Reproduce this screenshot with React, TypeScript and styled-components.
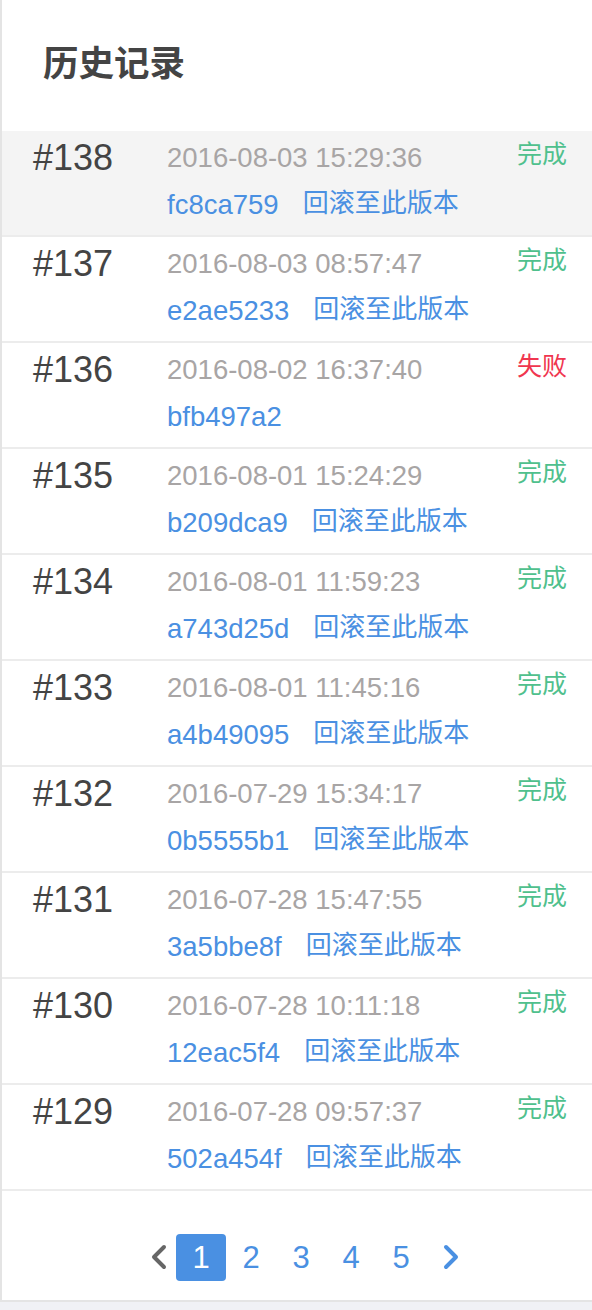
import React from "react";
import styled, { createGlobalStyle } from "styled-components";

const GlobalStyle = createGlobalStyle`
  html, body {
    margin: 0;
    padding: 0;
    background: #f0f1f5;
  }
  body {
    font-family: "Liberation Sans", "Noto Sans CJK SC", sans-serif;
  }
  * { box-sizing: border-box; }
`;

const Card = styled.div`
  width: 592px;
  background: #fff;
  border-left: 2px solid #e4e4e4;
  border-bottom: 2px solid #e4e4e4;
`;

const Header = styled.div`
  height: 131px;
  padding: 47px 0 0 41px;
`;

const Title = styled.h1`
  margin: 0;
  font-size: 35.5px;
  line-height: 35px;
  font-weight: 700;
  color: #444;
`;

const Row = styled.div<{ $active?: boolean }>`
  display: grid;
  grid-template-columns: 134px 1fr auto;
  height: 106px;
  padding: 0 25px 0 31px;
  background: ${(p) => (p.$active ? "#f4f4f4" : "#fff")};
  border-bottom: 2px solid #ececec;
`;

const Num = styled.div`
  padding-top: 9px;
  font-size: 36px;
  line-height: 36px;
  color: #444;
`;

const Info = styled.div`
  display: flex;
  flex-direction: column;
  padding-top: 13px;
  gap: 19px;
`;

const Date = styled.div`
  font-size: 27.5px;
  line-height: 28px;
  color: #a8a5a5;
`;

const Line = styled.div`
  display: flex;
  align-items: baseline;
  gap: 24px;
  font-size: 27.5px;
  line-height: 28px;
  color: #4a90e2;
`;

const Hash = styled.span``;

const Rollback = styled.a`
  font-size: 26px;
  color: #4a90e2;
  text-decoration: none;
  position: relative;
  top: -2px;
  cursor: pointer;
`;

const Status = styled.div<{ $ok: boolean }>`
  padding-top: 9px;
  font-size: 25px;
  line-height: 28px;
  color: ${(p) => (p.$ok ? "#4fc08d" : "#f0364f")};
`;

const Pager = styled.div`
  display: flex;
  align-items: center;
  height: 109px;
  padding: 42px 0 19px 148px;
`;

const Arrow = styled.button<{ $w: number; $align: string }>`
  width: ${(p) => p.$w}px;
  height: 47px;
  padding: 0;
  border: none;
  background: none;
  display: flex;
  align-items: center;
  justify-content: ${(p) => p.$align};
  cursor: pointer;
`;

const PageBtn = styled.button<{ $active?: boolean }>`
  width: 50px;
  height: 47px;
  padding: 0;
  border: none;
  border-radius: 4px;
  background: ${(p) => (p.$active ? "#4a90e2" : "transparent")};
  color: ${(p) => (p.$active ? "#fff" : "#4a90e2")};
  font-family: "Liberation Sans", sans-serif;
  font-size: 31px;
  line-height: 47px;
  cursor: pointer;
`;

type Item = {
  id: number;
  date: string;
  hash: string;
  ok: boolean;
};

const items: Item[] = [
  { id: 138, date: "2016-08-03 15:29:36", hash: "fc8ca759", ok: true },
  { id: 137, date: "2016-08-03 08:57:47", hash: "e2ae5233", ok: true },
  { id: 136, date: "2016-08-02 16:37:40", hash: "bfb497a2", ok: false },
  { id: 135, date: "2016-08-01 15:24:29", hash: "b209dca9", ok: true },
  { id: 134, date: "2016-08-01 11:59:23", hash: "a743d25d", ok: true },
  { id: 133, date: "2016-08-01 11:45:16", hash: "a4b49095", ok: true },
  { id: 132, date: "2016-07-29 15:34:17", hash: "0b5555b1", ok: true },
  { id: 131, date: "2016-07-28 15:47:55", hash: "3a5bbe8f", ok: true },
  { id: 130, date: "2016-07-28 10:11:18", hash: "12eac5f4", ok: true },
  { id: 129, date: "2016-07-28 09:57:37", hash: "502a454f", ok: true },
];

const Chevron = ({ dir, color }: { dir: "left" | "right"; color: string }) => (
  <svg width="18" height="26" viewBox="0 0 18 26">
    <polyline
      points={dir === "left" ? "14,3 4,13 14,23" : "4,3 14,13 4,23"}
      fill="none"
      stroke={color}
      strokeWidth="4"
      strokeLinecap="round"
      strokeLinejoin="round"
    />
  </svg>
);

export default function App() {
  return (
    <>
      <GlobalStyle />
      <Card>
        <Header>
          <Title>历史记录</Title>
        </Header>
        {items.map((it, i) => (
          <Row key={it.id} $active={i === 0}>
            <Num>#{it.id}</Num>
            <Info>
              <Date>{it.date}</Date>
              <Line>
                <Hash>{it.hash}</Hash>
                {it.ok && <Rollback>回滚至此版本</Rollback>}
              </Line>
            </Info>
            <Status $ok={it.ok}>{it.ok ? "完成" : "失败"}</Status>
          </Row>
        ))}
        <Pager>
          <Arrow $w={26} $align="flex-start">
            <Chevron dir="left" color="#666" />
          </Arrow>
          {[1, 2, 3, 4, 5].map((n) => (
            <PageBtn key={n} $active={n === 1}>
              {n}
            </PageBtn>
          ))}
          <Arrow $w={50} $align="center">
            <Chevron dir="right" color="#4a90e2" />
          </Arrow>
        </Pager>
      </Card>
    </>
  );
}
